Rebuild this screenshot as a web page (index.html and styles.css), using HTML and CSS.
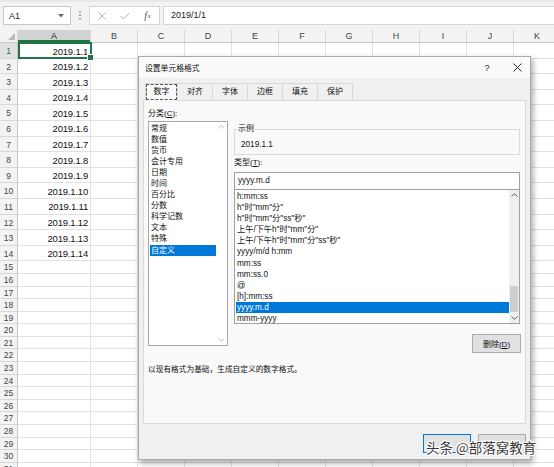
FILE: index.html
```html
<!DOCTYPE html>
<html lang="zh-CN">
<head>
<meta charset="utf-8">
<title>设置单元格格式</title>
<link rel="stylesheet" href="styles.css">
</head>
<body>
<div class="app">
  <div class="fbar">
    <div class="namebox"><span>A1</span><svg class="caret" width="6" height="4" viewBox="0 0 6 4"><path d="M0 0H6L3 3.5Z" fill="#6b6b6b"/></svg></div>
    <div class="grip"><svg width="2" height="9" viewBox="0 0 2 9"><rect y="0" width="2" height="1.5" fill="#a0a0a0"/><rect y="3.5" width="2" height="1.5" fill="#a0a0a0"/><rect y="7" width="2" height="1.5" fill="#a0a0a0"/></svg></div>
    <div class="fbtns">
      <span class="fb"><svg width="8" height="8" viewBox="0 0 8 8"><path d="M0.5 0.5L7.5 7.5M7.5 0.5L0.5 7.5" stroke="#b4b4b4" stroke-width="1"/></svg></span>
      <span class="fb"><svg width="10" height="8" viewBox="0 0 10 8"><path d="M0.8 4.2L3.6 7L9.2 0.8" fill="none" stroke="#b4b4b4" stroke-width="1"/></svg></span>
      <span class="fb fx"><i>f</i><i class="x">x</i></span>
    </div>
    <div class="finput">2019/1/1</div>
  </div>

  <div class="sheet">
    <div class="hrow">
      <div class="corner"></div>
      <div class="ch colA">A</div><div class="ch">B</div><div class="ch">C</div><div class="ch">D</div><div class="ch">E</div><div class="ch">F</div><div class="ch">G</div><div class="ch">H</div><div class="ch">I</div><div class="ch">J</div><div class="ch">K</div>
    </div>
    <div class="row tall"><div class="rh cur">1</div><div class="c colA sel">2019.1.1</div><div class="rest"></div></div>
    <div class="row tall"><div class="rh">2</div><div class="c colA">2019.1.2</div><div class="rest"></div></div>
    <div class="row tall"><div class="rh">3</div><div class="c colA">2019.1.3</div><div class="rest"></div></div>
    <div class="row tall"><div class="rh">4</div><div class="c colA">2019.1.4</div><div class="rest"></div></div>
    <div class="row tall"><div class="rh">5</div><div class="c colA">2019.1.5</div><div class="rest"></div></div>
    <div class="row tall"><div class="rh">6</div><div class="c colA">2019.1.6</div><div class="rest"></div></div>
    <div class="row tall"><div class="rh">7</div><div class="c colA">2019.1.7</div><div class="rest"></div></div>
    <div class="row tall"><div class="rh">8</div><div class="c colA">2019.1.8</div><div class="rest"></div></div>
    <div class="row tall"><div class="rh">9</div><div class="c colA">2019.1.9</div><div class="rest"></div></div>
    <div class="row tall"><div class="rh">10</div><div class="c colA">2019.1.10</div><div class="rest"></div></div>
    <div class="row tall"><div class="rh">11</div><div class="c colA">2019.1.11</div><div class="rest"></div></div>
    <div class="row tall"><div class="rh">12</div><div class="c colA">2019.1.12</div><div class="rest"></div></div>
    <div class="row tall"><div class="rh">13</div><div class="c colA">2019.1.13</div><div class="rest"></div></div>
    <div class="row tall"><div class="rh">14</div><div class="c colA">2019.1.14</div><div class="rest"></div></div>
    <div class="row"><div class="rh">15</div><div class="c colA"></div><div class="rest"></div></div>
    <div class="row"><div class="rh">16</div><div class="c colA"></div><div class="rest"></div></div>
    <div class="row"><div class="rh">17</div><div class="c colA"></div><div class="rest"></div></div>
    <div class="row"><div class="rh">18</div><div class="c colA"></div><div class="rest"></div></div>
    <div class="row"><div class="rh">19</div><div class="c colA"></div><div class="rest"></div></div>
    <div class="row"><div class="rh">20</div><div class="c colA"></div><div class="rest"></div></div>
    <div class="row"><div class="rh">21</div><div class="c colA"></div><div class="rest"></div></div>
    <div class="row"><div class="rh">22</div><div class="c colA"></div><div class="rest"></div></div>
    <div class="row"><div class="rh">23</div><div class="c colA"></div><div class="rest"></div></div>
    <div class="row"><div class="rh">24</div><div class="c colA"></div><div class="rest"></div></div>
    <div class="row"><div class="rh">25</div><div class="c colA"></div><div class="rest"></div></div>
    <div class="row"><div class="rh">26</div><div class="c colA"></div><div class="rest"></div></div>
    <div class="row"><div class="rh">27</div><div class="c colA"></div><div class="rest"></div></div>
    <div class="row"><div class="rh">28</div><div class="c colA"></div><div class="rest"></div></div>
    <div class="row"><div class="rh">29</div><div class="c colA"></div><div class="rest"></div></div>
    <div class="row"><div class="rh">30</div><div class="c colA"></div><div class="rest"></div></div>
    <div class="row"><div class="rh">31</div><div class="c colA"></div><div class="rest"></div></div>
  </div>

  <div class="dialog">
    <div class="titlebar">
      <span class="title">设置单元格格式</span>
      <span class="help">?</span>
      <span class="close"><svg width="9" height="9" viewBox="0 0 9 9"><path d="M0.5 0.5L8.5 8.5M8.5 0.5L0.5 8.5" stroke="#333" stroke-width="1"/></svg></span>
    </div>
    <div class="tabs">
      <span class="tab active">数字</span><span class="tab">对齐</span><span class="tab">字体</span><span class="tab">边框</span><span class="tab">填充</span><span class="tab">保护</span>
    </div>
    <div class="panel">
      <div class="cols">
        <div class="catcol">
          <div class="lbl">分类(<u>C</u>):</div>
          <div class="listbox cat">
            <ul class="items">
              <li>常规</li><li>数值</li><li>货币</li><li>会计专用</li><li>日期</li><li>时间</li><li>百分比</li><li>分数</li><li>科学记数</li><li>文本</li><li>特殊</li><li class="sel">自定义</li>
            </ul>
            <div class="vbar light">
              <span class="arr"><svg width="7" height="4" viewBox="0 0 7 4"><path d="M0.5 3.5L3.5 0.7L6.5 3.5" fill="none" stroke="#c2c2c2" stroke-width="1"/></svg></span>
              <span class="track"></span>
              <span class="arr"><svg width="7" height="4" viewBox="0 0 7 4"><path d="M0.5 0.5L3.5 3.3L6.5 0.5" fill="none" stroke="#c2c2c2" stroke-width="1"/></svg></span>
            </div>
          </div>
        </div>
        <div class="typecol">
          <fieldset class="sample"><legend>示例</legend><div class="sval">2019.1.1</div></fieldset>
          <div class="lbl">类型(<u>T</u>):</div>
          <div class="tinput">yyyy.m.d</div>
          <div class="listbox types">
            <ul class="items">
              <li>h:mm:ss</li>
              <li>h"时"mm"分"</li>
              <li>h"时"mm"分"ss"秒"</li>
              <li>上午/下午h"时"mm"分"</li>
              <li>上午/下午h"时"mm"分"ss"秒"</li>
              <li>yyyy/m/d h:mm</li>
              <li>mm:ss</li>
              <li>mm:ss.0</li>
              <li>@</li>
              <li>[h]:mm:ss</li>
              <li class="sel">yyyy.m.d</li>
              <li>mmm-yyyy</li>
            </ul>
            <div class="vbar">
              <span class="arr"><svg width="7" height="4" viewBox="0 0 7 4"><path d="M0.5 3.5L3.5 0.7L6.5 3.5" fill="none" stroke="#606060" stroke-width="1"/></svg></span>
              <span class="track"><span class="thumb"></span></span>
              <span class="arr"><svg width="7" height="4" viewBox="0 0 7 4"><path d="M0.5 0.5L3.5 3.3L6.5 0.5" fill="none" stroke="#606060" stroke-width="1"/></svg></span>
            </div>
          </div>
          <div class="btnrow"><button class="btn del">删除(<u>D</u>)</button></div>
        </div>
      </div>
      <p class="desc">以现有格式为基础，生成自定义的数字格式。</p>
    </div>
    <div class="footer">
      <button class="btn ok" aria-label="确定"></button>
      <button class="btn" aria-label="取消"></button>
    </div>
  </div>

  <div class="watermark">头条 @部落窝教育</div>
</div>
</body>
</html>
```

FILE: styles.css
```css
* { box-sizing: border-box; margin: 0; padding: 0; }
body {
  margin: 0;
  width: 554px;
  height: 467px;
  overflow: hidden;
  background: #ffffff;
  font-family: "Liberation Sans", "Noto Sans CJK SC", sans-serif;
  color: #000;
}
.app { position: relative; width: 554px; height: 467px; overflow: hidden; }

/* formula bar */
.fbar {
  height: 30px;
  background: #f3f3f3;
  border-top: 2px solid #e8e8e8;
  padding-top: 4px;
  display: flex;
  align-items: flex-start;
}
.namebox {
  margin-left: 3px;
  width: 68px;
  height: 19px;
  background: #fff;
  border: 1px solid #c8c8c8;
  display: flex;
  align-items: center;
  padding: 0 6px 0 5px;
  font-size: 9px;
  color: #222;
}
.namebox .caret { margin-left: auto; }
.grip { width: 18px; height: 19px; display: flex; align-items: center; justify-content: center; }
.fbtns {
  width: 71px;
  height: 19px;
  background: #fff;
  border: 1px solid #d6d6d6;
  display: flex;
  align-items: center;
}
.fb { width: 23.5px; display: flex; justify-content: center; align-items: center; }
.fx { font-family: "Liberation Serif", serif; font-size: 10px; color: #555; }
.fx .x { font-size: 7px; margin-left: 0.5px; }
.finput {
  margin-left: 3px;
  flex: 1;
  height: 19px;
  background: #fff;
  border: 1px solid #d6d6d6;
  border-right: none;
  padding-left: 7px;
  font-size: 9px;
  line-height: 17px;
  color: #222;
}

/* sheet */
.sheet { background: #fff; }
.hrow { display: flex; height: 13px; background: #f3f3f3; border-bottom: 1px solid #c8c8c8; }
.corner { width: 18px; flex: none; border-right: 1px solid #d4d4d4; position: relative; }
.corner::after {
  content: "";
  position: absolute;
  right: 2px;
  bottom: 2px;
  border-style: solid;
  border-width: 0 0 7px 7px;
  border-color: transparent transparent #b8b8b8 transparent;
}
.ch {
  width: 47px;
  flex: none;
  text-align: center;
  font-size: 9px;
  line-height: 12px;
  color: #444;
  border-right: 1px solid #d8d8d8;
}
.ch.colA {
  width: 73px;
  background: #d3d3d3;
  color: #1f1f1f;
  box-shadow: inset 0 -2px 0 #217346;
}
.row { display: flex; height: 12.6px; }
.row.tall { height: 15.6px; }
.rh {
  width: 18px;
  flex: none;
  background: #f3f3f3;
  border-right: 1px solid #c8c8c8;
  border-bottom: 1px solid #d8d8d8;
  font-size: 8.5px;
  line-height: 12px;
  text-align: center;
  color: #444;
}
.row.tall .rh { line-height: 16px; }
.rh.cur { background: #e1e1e1; color: #217346; }
.c {
  width: 73px;
  flex: none;
  border-right: 1px solid #e1e1e1;
  border-bottom: 1px solid #e1e1e1;
  text-align: right;
  padding: 1.5px 2px 0 0;
  font-size: 9.5px;
  letter-spacing: -0.2px;
  line-height: 14px;
  color: #111;
}
.c.sel { position: relative; }
.c.sel::before {
  content: "";
  position: absolute;
  left: 0;
  top: -1px;
  right: -2px;
  bottom: -1px;
  border: 2px solid #217346;
}
.c.sel::after {
  content: "";
  position: absolute;
  right: -4px;
  bottom: -3px;
  width: 5px;
  height: 5px;
  background: #217346;
  border: 1px solid #fff;
}
.rest {
  flex: 1;
  border-bottom: 1px solid #e1e1e1;
  background: repeating-linear-gradient(to right, transparent 0 46px, #e1e1e1 46px 47px);
}

/* dialog */
.dialog {
  position: absolute;
  left: 138px;
  top: 56px;
  width: 393px;
  height: 404px;
  background: #f0f0f0;
  border: 1px solid #a9a9a9;
  box-shadow: 2px 3px 6px rgba(0, 0, 0, 0.35);
  display: flex;
  flex-direction: column;
  font-size: 8px;
}
.titlebar {
  height: 21px;
  background: #fafafa;
  display: flex;
  align-items: center;
  padding-left: 6px;
}
.title { font-size: 7.8px; color: #111; }
.help { margin-left: auto; width: 20px; margin-right: 7px; text-align: center; font-size: 9px; color: #222; }
.close { width: 26px; display: flex; justify-content: center; }

.tabs {
  display: flex;
  margin-top: 5px;
  padding-left: 6px;
  height: 17px;
  position: relative;
  z-index: 2;
}
.tab {
  width: 35px;
  height: 17px;
  border: 1px solid #d9d9d9;
  border-left: none;
  border-bottom: none;
  background: #f0f0f0;
  text-align: center;
  line-height: 16px;
  font-size: 8px;
  color: #111;
}
.tab.active {
  width: 33px;
  height: 18px;
  border-left: 1px solid #d9d9d9;
  background: #f9f9f9;
  outline: 1px dashed #555;
  outline-offset: -2px;
}

.panel {
  margin: 0 4px;
  height: 324px;
  border: 1px solid #d9d9d9;
  background: #f9f9f9;
  padding: 7px 5px 0 4px;
}
.cols { display: flex; gap: 6px; }
.catcol { width: 80px; flex: none; }
.typecol { width: 286px; flex: none; }
.lbl { height: 12px; line-height: 12px; font-size: 8px; color: #111; }
.lbl u { text-decoration: underline; }

.listbox { display: flex; background: #fff; border: 1px solid #a8a8a8; }
.listbox.cat { margin-top: 1px; height: 225px; }
.listbox.types { margin-top: -1px; height: 135px; border-color: #a0a0a0; }
.items { flex: 1; list-style: none; padding: 1px 0 0 1px; overflow: hidden; min-width: 0; }
.items li {
  height: 11.05px;
  line-height: 11px;
  padding-left: 1px;
  white-space: nowrap;
  font-size: 8px;
  color: #111;
}
.types .items li { height: 11.1px; font-size: 8.2px; }
.items li.sel { background: #0078d7; color: #fff; }

.vbar { width: 10px; flex: none; display: flex; flex-direction: column; background: #f0f0f0; }
.vbar.light { width: 11px; background: #fff; }
.arr { height: 10px; display: flex; align-items: center; justify-content: center; }
.track { flex: 1; display: flex; flex-direction: column; align-items: center; }
.thumb { display: block; width: 8px; height: 26px; margin-top: 86px; background: #cdcdcd; }

.sample {
  margin-top: 15px;
  border: 1px solid #dcdcdc;
  padding: 0 6px 3px 6px;
  height: 32px;
}
.sample legend {
  margin-left: -4px;
  padding: 0 1px;
  font-size: 8px;
  line-height: 12px;
  color: #111;
}
.sval { margin-top: 4px; line-height: 12px; font-size: 8.2px; color: #111; }
.typecol .lbl { margin-top: 2px; }
.tinput {
  margin-top: 3px;
  height: 18px;
  background: #fff;
  border: 1px solid #a0a0a0;
  padding-left: 3px;
  line-height: 16px;
  font-size: 8.2px;
  color: #111;
}
.btnrow { display: flex; justify-content: flex-end; margin-top: 10px; margin-right: -1px; }
.btn {
  width: 49px;
  height: 19px;
  border: 1px solid #adadad;
  background: #e1e1e1;
  font-family: inherit;
  font-size: 8px;
  color: #111;
}
.desc { margin-top: 11px; line-height: 12px; font-size: 7.7px; color: #111; }

.footer {
  display: flex;
  justify-content: flex-end;
  gap: 7px;
  padding-right: 4px;
  margin-top: 10px;
}
.footer .btn { width: 48px; }
.footer .btn.ok { border-color: #0078d7; }

.watermark {
  position: absolute;
  left: 426px;
  top: 439px;
  font-family: "Noto Sans CJK SC", sans-serif;
  font-size: 13.5px;
  line-height: 16px;
  color: #3a3a3a;
  white-space: nowrap;
  text-shadow: 1px 0 0 #fff, -1px 0 0 #fff, 0 1px 0 #fff, 0 -1px 0 #fff, 1px 1px 0 #fff, -1px -1px 0 #fff, 1px -1px 0 #fff, -1px 1px 0 #fff, 0 0 3px #fff;
}
```
